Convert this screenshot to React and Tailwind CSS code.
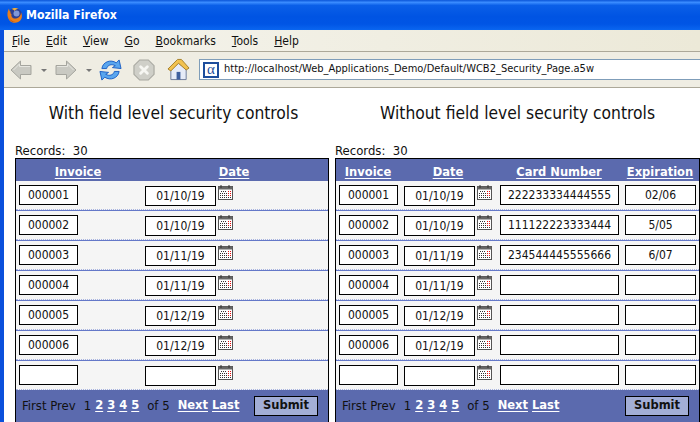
import React from "react";

const tahoma = { fontFamily: '"DejaVu Sans Condensed", "DejaVu Sans", sans-serif' };

const menus = [
  ["F", "ile"],
  ["E", "dit"],
  ["V", "iew"],
  ["G", "o"],
  ["B", "ookmarks"],
  ["T", "ools"],
  ["H", "elp"],
];

const rows = [
  ["000001", "01/10/19", "222233334444555", "02/06"],
  ["000002", "01/10/19", "111122223333444", "5/05"],
  ["000003", "01/11/19", "234544445555666", "6/07"],
  ["000004", "01/11/19", "", ""],
  ["000005", "01/12/19", "", ""],
  ["000006", "01/12/19", "", ""],
  ["", "", "", ""],
];

const FirefoxLogo = () => (
  <svg width="17" height="17" viewBox="0 0 17 17">
    <circle cx="9" cy="8" r="7" fill="#2a3f94" />
    <circle cx="10.5" cy="6.5" r="3" fill="#7f97d8" />
    <path d="M3 1.5 C0.5 6 1 11.5 4.5 14.5 C8 17 13.5 16 15.5 11.5 C16.2 9.5 16 7.5 15 5.5 C15 8.5 13 11 10 11.5 C7 12 4.8 9.8 5.5 7 C4.6 6.8 4.2 5.8 4.6 4.8 C3.6 4.2 3.1 3 3 1.5 Z" fill="#e97f1c" />
    <path d="M5.5 2 C7.5 0.6 10.5 0.6 12.5 2 C10.8 2 9.4 2.6 8.6 4 C8 3.1 6.9 2.3 5.5 2 Z" fill="#f4b43c" />
    <path d="M2.5 9 C3 12 5.5 14.5 9 14.6 C6 15.6 3 13 2.5 9 Z" fill="#b8480f" />
  </svg>
);

const Arrow = ({ flip }) => (
  <svg width="22" height="20" viewBox="0 0 22 20" className={flip ? "-scale-x-100" : ""}>
    <path d="M1 10 L10.5 1 V5.5 H21 V14.5 H10.5 V19 Z" fill="#c9c9c2" stroke="#a5a59e" strokeWidth="1" />
    <path d="M3.5 10 L9.5 4 V6.5 H20" fill="none" stroke="#e6e6e0" strokeWidth="1" />
  </svg>
);

const Caret = () => <div className="w-0 h-0 border-x-[3px] border-x-transparent border-t-[3px] border-t-[#777] mt-0.5" />;

const Reload = () => (
  <svg width="23" height="24" viewBox="0 0 24 25">
    <path d="M3 11 C4 4 12 1 18 5 L21 2 L23 11 L14 10 L17 8 C13 6 9 7 8 11 Z" fill="#5aa6ee" stroke="#1c5fc4" strokeWidth="1" />
    <path d="M21 14 C20 21 12 24 6 20 L3 23 L1 14 L10 15 L7 17 C11 19 15 18 16 14 Z" fill="#5aa6ee" stroke="#1c5fc4" strokeWidth="1" />
  </svg>
);

const Stop = () => (
  <svg width="22" height="22" viewBox="0 0 23 23">
    <path d="M7 1 H16 L22 7 V16 L16 22 H7 L1 16 V7 Z" fill="#cfcfc8" stroke="#a8a8a0" strokeWidth="1.2" />
    <path d="M8 8 L15 15 M15 8 L8 15" stroke="#f6f6f2" strokeWidth="3" strokeLinecap="round" />
  </svg>
);

const Home = () => (
  <svg width="23" height="25" viewBox="0 0 24 25">
    <path d="M4 12 V23 H20 V12 L12 6 Z" fill="#e6ebf7" stroke="#6d7a9a" strokeWidth="1" />
    <path d="M1 12 L11 2 H15 L23 11 L20 13 L12 6 L4 14 Z" fill="#f2c24e" stroke="#a6812b" strokeWidth="1" />
    <rect x="10" y="15" width="4" height="8" fill="#3e5f9e" />
  </svg>
);

const Calendar = () => (
  <svg width="15" height="15" viewBox="0 0 15 15" className="shrink-0">
    <rect x="0.5" y="1.5" width="14" height="13" fill="#fff" stroke="#555" />
    <rect x="0.5" y="1.5" width="14" height="3" fill="#666" />
    <path d="M3 0 V3 M11 0 V3" stroke="#333" />
    <path d="M3 6.5 H8 M2 8.5 H10 M2 10.5 H10 M2 12.5 H10" stroke="#333" strokeDasharray="1 1" />
    <path d="M10 6.5 H13 M10 8.5 H13 M10 10.5 H13" stroke="#e01010" strokeDasharray="1 1" />
    <path d="M10 12.5 H13" stroke="#333" strokeDasharray="1 1" />
  </svg>
);

const Field = ({ value, className }) => (
  <div
    className={`h-5 bg-white border border-black flex items-center justify-center text-[12px] leading-none text-[#111] ${className}`}
    style={tahoma}
  >
    {value}
  </div>
);

const HeadLink = ({ children }) => (
  <span className="font-['DejaVu_Sans'] font-bold text-[11.5px] text-white underline underline-offset-2">{children}</span>
);

const Pager = () => (
  <div className="flex items-center text-[13px] text-[#111]" style={tahoma}>
    <span>First Prev</span>
    <span className="ml-2">1</span>
    {["2", "3", "4", "5"].map((n) => (
      <a key={n} className="ml-1 font-['DejaVu_Sans'] font-bold text-[11.5px] text-white underline underline-offset-2">
        {n}
      </a>
    ))}
    <span className="ml-2">of 5</span>
    <a className="ml-2 font-['DejaVu_Sans'] font-bold text-[11.5px] text-white underline underline-offset-2">Next</a>
    <a className="ml-1 font-['DejaVu_Sans'] font-bold text-[11.5px] text-white underline underline-offset-2">Last</a>
  </div>
);

const Panel = ({ title, full, className, titleClass }) => (
  <div className={`flex flex-col shrink-0 ${className}`}>
    <div className={`text-[17.3px] leading-[22px] text-[#111] text-center mt-[14px] ${titleClass}`} style={tahoma}>
      {title}
    </div>
    <div className="text-[13px] leading-[15px] mt-[19px] text-[#111]" style={tahoma}>
      Records:&nbsp; 30
    </div>
    <div className="border border-black bg-[#f5f5f5]">
      <div className="h-[22px] bg-[#5b6aae] flex items-center">
        {full ? (
          <>
            <div className="w-16 text-center"><HeadLink>Invoice</HeadLink></div>
            <div className="w-24 text-center"><HeadLink>Date</HeadLink></div>
            <div className="w-[126px] text-center"><HeadLink>Card Number</HeadLink></div>
            <div className="w-[76px] text-center"><HeadLink>Expiration</HeadLink></div>
          </>
        ) : (
          <>
            <div className="w-[124px] text-center"><HeadLink>Invoice</HeadLink></div>
            <div className="w-[188px] text-center"><HeadLink>Date</HeadLink></div>
          </>
        )}
      </div>
      {rows.map((row, i) => (
        <div key={i}>
          <div className="h-[28px] pl-[3px] pt-[4px] flex items-start">
            <Field value={row[0]} className="w-[59px]" />
            <Field value={row[1]} className={`w-[71px] mt-px ${full ? "ml-[6px]" : "ml-[67px]"}`} />
            <div className="ml-0.5"><Calendar /></div>
            {full && (
              <>
                <Field value={row[2]} className="w-[119px] ml-2" />
                <Field value={row[3]} className="w-[71px] ml-[6px]" />
              </>
            )}
          </div>
          <div className="border-t border-dotted border-[#a9b4e0]" />
          {i < rows.length - 1 && <div className="h-px bg-[#6478c8]" />}
        </div>
      ))}
      <div className="h-[32px] bg-[#5b6aae] flex items-center pl-[6px] pr-[10px] justify-between">
        <Pager />
        <button className="w-[64px] h-5 bg-[#a3aed6] border border-black font-['DejaVu_Sans'] font-bold text-[11.5px] leading-none text-[#111]">
          Submit
        </button>
      </div>
    </div>
  </div>
);

export default function App() {
  return (
    <div className="h-[422px] w-[700px] overflow-hidden bg-white flex flex-col">
      <div className="h-[30px] shrink-0 flex items-center pl-[6px] bg-[linear-gradient(to_bottom,#0a55d8_0%,#3a8cff_8%,#0a5fe8_18%,#0054e3_55%,#0055e5_80%,#0a66f0_100%)]">
        <FirefoxLogo />
        <span className="ml-[3px] text-white font-bold text-[12.2px]" style={tahoma}>Mozilla Firefox</span>
      </div>
      <div className="flex-1 border-l-4 border-[#0a50dc] flex flex-col min-h-0">
        <div className="h-[22px] shrink-0 bg-gradient-to-r from-[#f5f4ee] to-[#ece9d8] border-b border-[#aca899] flex items-center text-[12px] text-[#111] pl-2" style={tahoma}>
          {menus.map(([a, b]) => (
            <span key={a} className="mr-[16px]"><span className="underline">{a}</span>{b}</span>
          ))}
        </div>
        <div className="h-[36px] shrink-0 bg-[#efede3] border-b border-[#aca899] flex items-center pl-1.5">
          <Arrow />
          <div className="ml-[9px]"><Caret /></div>
          <div className="ml-2"><Arrow flip /></div>
          <div className="ml-[9px]"><Caret /></div>
          <div className="ml-[7px]"><Reload /></div>
          <div className="ml-[11px]"><Stop /></div>
          <div className="ml-3"><Home /></div>
          <div className="ml-[9px] flex-1 h-[21px] bg-white border-y border-l border-[#7f9db9] flex items-center pl-[3px]">
            <div className="w-4 h-4 bg-white border-2 border-[#1d4d9c] flex items-center justify-center text-[15px] leading-none text-[#1d4d9c] font-['Liberation_Serif']">
              α
            </div>
            <span className="ml-[5px] text-[11px] text-[#111]" style={tahoma}>http://localhost/Web_Applications_Demo/Default/WCB2_Security_Page.a5w</span>
          </div>
        </div>
        <div className="flex pl-[11px] gap-[6px]">
          <Panel title="With field level security controls" titleClass="pl-[3px]" className="w-[314px]" />
          <Panel title="Without field level security controls" full className="w-[365px]" />
        </div>
      </div>
    </div>
  );
}
